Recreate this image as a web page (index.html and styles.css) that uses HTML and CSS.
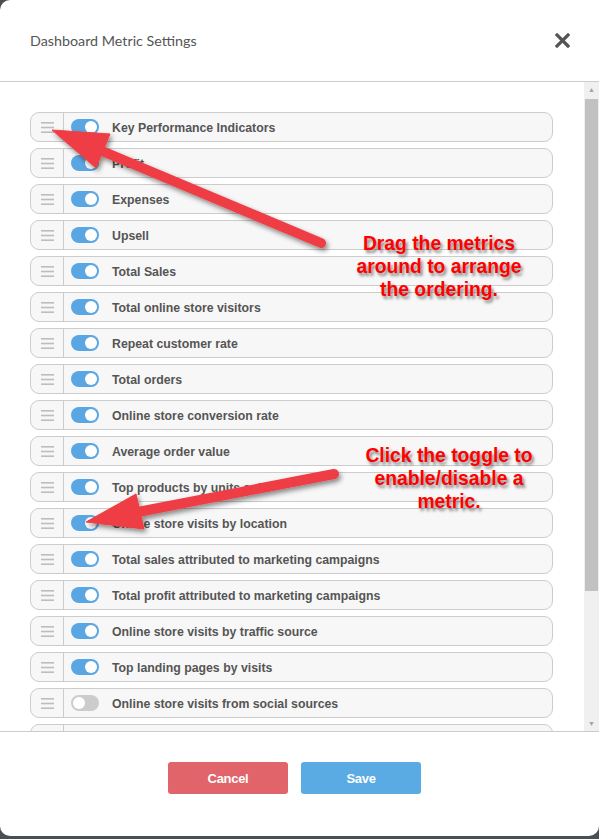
FILE: index.html
```html
<!DOCTYPE html>
<html>

<head>
    <title>Dashboard Metric Settings</title>
    <link rel="stylesheet" href="styles.css">
</head>

<body>
    <div class="modal">
        <div class="modalHeader">
            <h2 class="modalTitle">Dashboard Metric Settings</h2>
            <button class="btnClose" aria-label="Close">
                <svg width="15" height="15" viewBox="0 0 15 15">
                    <path d="M2 2 L13 13 M13 2 L2 13" stroke="#555" stroke-width="3.2" stroke-linecap="square" />
                </svg>
            </button>
        </div>

        <div class="modalBody">
            <ul class="metricList" id="metricList"></ul>
            <div class="scrollBar">
                <div class="scrollArrow">&#9650;</div>
                <div class="scrollTrack">
                    <div class="scrollThumb"></div>
                </div>
                <div class="scrollArrow">&#9660;</div>
            </div>
        </div>

        <div class="modalFooter">
            <button class="btnCancel">Cancel</button>
            <button class="btnSave">Save</button>
        </div>
    </div>

    <!-- annotations drawn over the screenshot -->
    <svg class="arrows" width="599" height="839" viewBox="0 0 599 839">
        <defs>
            <filter id="sombra" x="-20%" y="-20%" width="140%" height="140%">
                <feDropShadow dx="2" dy="3" stdDeviation="2.5" flood-color="#000" flood-opacity="0.45" />
            </filter>
        </defs>
        <g fill="#ef3e44" stroke="#ef3e44" filter="url(#sombra)">
            <line x1="321" y1="243" x2="102" y2="151" stroke-width="10" stroke-linecap="round" />
            <polygon points="52,130 110,134 96,168" stroke-width="1" stroke-linejoin="round" />
            <line x1="334" y1="474" x2="138" y2="512" stroke-width="10" stroke-linecap="round" />
            <polygon points="86,522 136,494 144,529" stroke-width="1" stroke-linejoin="round" />
        </g>
    </svg>
    <div class="nota notaDrag">Drag the metrics<br>around to arrange<br>the ordering.</div>
    <div class="nota notaToggle">Click the toggle to<br>enable/disable a<br>metric.</div>

    <script>
        var metricas = [
            { nome: 'Key Performance Indicators', ativo: true },
            { nome: 'Profit', ativo: true },
            { nome: 'Expenses', ativo: true },
            { nome: 'Upsell', ativo: true },
            { nome: 'Total Sales', ativo: true },
            { nome: 'Total online store visitors', ativo: true },
            { nome: 'Repeat customer rate', ativo: true },
            { nome: 'Total orders', ativo: true },
            { nome: 'Online store conversion rate', ativo: true },
            { nome: 'Average order value', ativo: true },
            { nome: 'Top products by units sold', ativo: true },
            { nome: 'Online store visits by location', ativo: true },
            { nome: 'Total sales attributed to marketing campaigns', ativo: true },
            { nome: 'Total profit attributed to marketing campaigns', ativo: true },
            { nome: 'Online store visits by traffic source', ativo: true },
            { nome: 'Top landing pages by visits', ativo: true },
            { nome: 'Online store visits from social sources', ativo: false },
            // linha cortada pela rolagem, sem texto visivel
            { nome: '', ativo: false }
        ];

        var lista = document.getElementById('metricList');

        metricas.forEach(function (item) {
            var li = document.createElement('li');
            li.className = 'metricRow';

            var handle = document.createElement('span');
            handle.className = 'dragHandle';
            handle.innerHTML = '<svg width="13" height="11" viewBox="0 0 13 11">' +
                '<rect x="0" y="0" width="13" height="1.6" fill="#bdbdbd"/>' +
                '<rect x="0" y="4.7" width="13" height="1.6" fill="#bdbdbd"/>' +
                '<rect x="0" y="9.4" width="13" height="1.6" fill="#bdbdbd"/></svg>';
            li.appendChild(handle);

            var toggle = document.createElement('span');
            toggle.className = item.ativo ? 'toggle toggleOn' : 'toggle';
            toggle.onclick = function () {
                item.ativo = !item.ativo;
                toggle.classList.toggle('toggleOn');
            };
            li.appendChild(toggle);

            var label = document.createElement('span');
            label.className = 'metricName';
            label.textContent = item.nome;
            li.appendChild(label);

            lista.appendChild(li);
        });
    </script>
</body>

</html>
```

FILE: styles.css
```css
body {
    margin: 0;
    width: 599px;
    height: 839px;
    background-color: #4a4f55;
    overflow: hidden;
    font-family: "Liberation Sans", Arial, sans-serif;
}

.modal {
    width: 599px;
    height: 836px;
    background-color: #fff;
    border-radius: 10px 0 10px 10px;
    display: flex;
    flex-direction: column;
    overflow: hidden;
}

.modalHeader {
    height: 81px;
    border-bottom: 1px solid #cccccc;
    display: flex;
    align-items: center;
    justify-content: space-between;
    padding: 0 30px 0 30px;
    flex-shrink: 0;
}

.modalTitle {
    margin: 0;
    font-family: Lato, "Open Sans", sans-serif;
    font-weight: normal;
    font-size: 14.3px;
    color: #555;
}

.btnClose {
    background: none;
    border: none;
    padding: 0;
    margin-right: -1px;
    cursor: pointer;
    display: flex;
}

.modalBody {
    height: 649px;
    display: flex;
    flex-shrink: 0;
}

.metricList {
    list-style: none;
    margin: 0;
    padding: 30px 31px 0 30px;
    flex: 1;
    overflow: hidden;
}

.metricRow {
    height: 30px;
    box-sizing: border-box;
    margin-bottom: 6px;
    border: 1px solid #cccccc;
    border-radius: 9px;
    background-color: #f7f7f7;
    display: flex;
    align-items: center;
}

.dragHandle {
    width: 32px;
    height: 100%;
    border-right: 1px solid #cccccc;
    display: flex;
    align-items: center;
    justify-content: center;
    flex-shrink: 0;
    cursor: move;
}

.toggle {
    width: 28px;
    height: 16px;
    margin-left: 7px;
    border-radius: 8px;
    background-color: #cccccc;
    position: relative;
    flex-shrink: 0;
    cursor: pointer;
}

.toggle::after {
    content: "";
    position: absolute;
    top: 2px;
    left: 2px;
    width: 12px;
    height: 12px;
    border-radius: 50%;
    background-color: #fff;
}

.toggleOn {
    background-color: #5aa6e2;
}

.toggleOn::after {
    left: 14px;
}

.metricName {
    margin-left: 13px;
    padding-top: 2px;
    font-size: 12.3px;
    font-weight: bold;
    color: #555;
    white-space: nowrap;
}

.scrollBar {
    width: 15px;
    background-color: #f0f0f0;
    display: flex;
    flex-direction: column;
    flex-shrink: 0;
}

.scrollArrow {
    height: 15px;
    font-size: 7px;
    color: #a3a3a3;
    text-align: center;
    line-height: 15px;
}

.scrollTrack {
    flex: 1;
    padding: 2px 0 0 0;
}

.scrollThumb {
    height: 492px;
    margin: 0 1px;
    background-color: #c1c1c1;
}

.modalFooter {
    flex: 1;
    border-top: 1px solid #cccccc;
    display: flex;
    justify-content: center;
    align-items: flex-start;
    gap: 13px;
    padding: 30px 10px 0 0;
}

.modalFooter button {
    width: 120px;
    height: 32px;
    border: none;
    border-radius: 3px;
    color: white;
    font-family: "Liberation Sans", Arial, sans-serif;
    font-size: 13px;
    font-weight: bold;
    letter-spacing: -0.3px;
    cursor: pointer;
}

.btnCancel {
    background-color: #e06469;
}

.btnSave {
    background-color: #5aabe3;
}

.arrows {
    position: absolute;
    left: 0;
    top: 0;
    pointer-events: none;
}

.nota {
    position: absolute;
    width: 230px;
    text-align: center;
    color: #ff0000;
    font-size: 19.3px;
    font-weight: bold;
    line-height: 23px;
    text-shadow: 2px 3px 3px rgba(0, 0, 0, 0.45);
}

.notaDrag {
    left: 324px;
    top: 232px;
}

.notaToggle {
    left: 334px;
    top: 444px;
}
```
